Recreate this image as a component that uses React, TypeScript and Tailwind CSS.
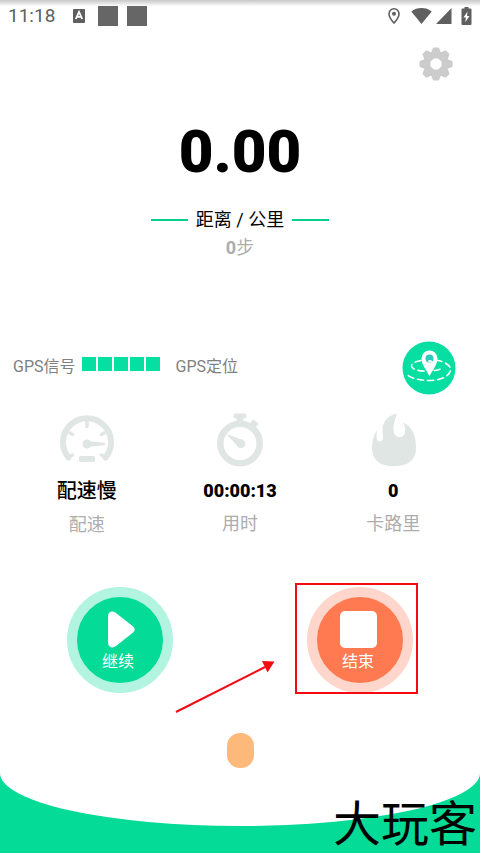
import type { ReactNode } from 'react'

const signalBars = [1, 2, 3, 4, 5]

function StatusBar() {
  return (
    <div className="flex h-8 items-center justify-between bg-linear-to-b from-[#c8c8c8] from-0% via-white via-20% to-white px-2 text-[#5f5f5f]">
      <div className="flex items-center">
        <span className="w-16 text-[19px] leading-6">11:18</span>
        <svg className="mr-3 h-[14px] w-[14px]" viewBox="0 0 14 14">
          <rect x="1" width="12" height="14" rx="1" fill="currentColor" />
          <path
            d="M3.8 10 7 3l3.2 7M5 7.8h4"
            fill="none"
            stroke="white"
            strokeWidth="1.8"
          />
        </svg>
        <span className="mr-[9px] h-5 w-5 bg-[#666]" />
        <span className="h-5 w-5 bg-[#666]" />
      </div>
      <div className="flex items-center">
        <svg className="mr-[10px] h-[18px] w-[14px]" viewBox="0 0 14 18">
          <path
            d="M7 1.8A5 5 0 0 0 2 6.9C2 10.4 7 16 7 16s5-5.6 5-9.1A5 5 0 0 0 7 1.8Z"
            fill="none"
            stroke="currentColor"
            strokeWidth="1.6"
          />
          <circle cx="7" cy="6.8" r="2" fill="currentColor" />
        </svg>
        <svg className="mr-1 h-4 w-[21px]" viewBox="0 0 21 16">
          <path
            d="M10.5 16 .3 3.4C3.2 1.2 6.7 0 10.5 0s7.300 1.200 10.200 3.400Z"
            fill="currentColor"
          />
        </svg>
        <svg className="mr-[9px] h-4 w-4" viewBox="0 0 16 16">
          <path d="M15.5 0v16H0Z" fill="currentColor" />
        </svg>
        <svg className="h-[18px] w-[11px]" viewBox="0 0 11 18">
          <path
            d="M3.500 0h4v1.500H9.500a1 1 0 0 1 1 1V17a1 1 0 0 1-1 1h-8a1 1 0 0 1-1-1V2.500a1 1 0 0 1 1-1h2Z"
            fill="currentColor"
          />
          <path d="M6.500 4.500 2.500 10.500h2.500l-.8 4.700L8.500 9H6Z" fill="white" />
        </svg>
      </div>
    </div>
  )
}

function GearIcon() {
  return (
    <svg className="h-[34px] w-[34px]" viewBox="-17 -17 34 34">
      <g fill="#cccccc">
        <path
          id="tooth"
          d="M-5.500 -10 -3 -16Q-2.700 -16.600 -2 -16.600H2Q2.700 -16.600 3 -16L5.500 -10Z"
        />
        <use href="#tooth" transform="rotate(45)" />
        <use href="#tooth" transform="rotate(90)" />
        <use href="#tooth" transform="rotate(135)" />
        <use href="#tooth" transform="rotate(180)" />
        <use href="#tooth" transform="rotate(225)" />
        <use href="#tooth" transform="rotate(270)" />
        <use href="#tooth" transform="rotate(315)" />
      </g>
      <circle r="9" fill="none" stroke="#cccccc" strokeWidth="6.500" />
    </svg>
  )
}

function MapIcon() {
  return (
    <svg className="h-[54px] w-[54px]" viewBox="0 0 54 54">
      <circle cx="27" cy="27" r="26.500" fill="#06dfa1" />
      <g
        fill="none"
        stroke="white"
        strokeWidth="1.600"
        strokeDasharray="6 4"
        strokeLinecap="round"
      >
        <path d="M19 19.500C13 20.500 9.500 22.500 9.500 25c0 3.200 7 5.200 14 5.200" />
        <path d="M34 19c8 1.500 14.500 5 14.500 9.500 0 6-9 11-21 11-10 0-18-2-22.500-6" />
        <path d="M32 29.500c3 0 7-1.500 9-3" />
      </g>
      <path
        d="M27.500 35.500C25 29.500 19.500 24 19.500 17.500a8 8 0 0 1 16 0C35.500 24 30 29.500 27.500 35.500Z"
        fill="white"
      />
      <circle cx="27.500" cy="17.500" r="4" fill="#2fc9bf" />
      <path d="M26 19.500q2-1 4.500.500-1.500 2-4 1Z" fill="white" />
    </svg>
  )
}

function GaugeIcon() {
  return (
    <svg className="h-14 w-14" viewBox="0 0 56 56">
      <g fill="none" stroke="#e0e6e4" strokeLinecap="round">
        <path d="M9.500 45.500A24 24 0 1 1 46.500 45.500" strokeWidth="6" />
        <path
          d="M28 9v5.500M11 21l2.500 1.500M45 21l-2.500 1.500M9.500 45l4-2M46.500 45l-4-2"
          strokeWidth="3.500"
        />
      </g>
      <path
        d="M28 27.500a4.500 4.500 0 1 0 0 9q2.500 0 4-2l14-1.300v-2.400L32 29.500q-1.500-2-4-2Z"
        fill="#e0e6e4"
      />
      <rect x="20" y="44" width="16" height="6" rx="1.500" fill="#e0e6e4" />
    </svg>
  )
}

function StopwatchIcon() {
  return (
    <svg className="h-14 w-14" viewBox="0 0 56 56">
      <circle
        cx="28"
        cy="31.500"
        r="19.700"
        fill="none"
        stroke="#e0e6e4"
        strokeWidth="6.500"
      />
      <path
        d="M22.500 1.500h11q.800 0 .8.800V5q0 .800-.800 1l-2 .500V11h-7V6.500l-2-.5q-.800-.200-.800-1V2.300q0-.800.800-.800Z"
        fill="#e0e6e4"
      />
      <path
        d="m41.500 7.500 4.500 3.500q.700.600.200 1.300l-3.500 4.700-5.500-4 3-5q.500-.900 1.300-.500Z"
        fill="#e0e6e4"
      />
      <path
        d="M14 21.800 28.800 27.200a4.400 4.400 0 1 1-4.200 5.800Z"
        fill="#e0e6e4"
      />
    </svg>
  )
}

function FlameIcon() {
  return (
    <svg className="h-14 w-14" viewBox="0 0 56 56">
      <path
        d="M32 1.500C24 3 17.500 9 17.500 17c0 3 .8 6 .5 9-.2 2-1.300 3.500-3 3.500-4.500 0-3.500-6-3-11.500C8.500 23 7 29 7 35.500 7 48 15 54.300 29 54.300S51 48 51 35.500C51 24 47 14 38 10.500c2 3 2.500 6 2 9.500-.5 3-2.500 5-5.300 5-3.500 0-5.700-2.500-6-6C28 12.500 30 7 32 1.500Z"
        fill="#e0e6e4"
      />
    </svg>
  )
}

function Stat(props: { icon: ReactNode; value: ReactNode; label: string }) {
  return (
    <div className="flex flex-col items-center">
      {props.icon}
      <div className="mt-[11px] leading-6">{props.value}</div>
      <div className="mt-2 text-[18px] leading-6 text-[#adadad]">
        {props.label}
      </div>
    </div>
  )
}

export default function App() {
  return (
    <div className="flex min-h-screen w-full flex-col overflow-hidden bg-white font-[Roboto,'Noto_Sans_CJK_SC',sans-serif] text-black">
      <StatusBar />
      <header className="flex justify-end pr-[27px] pt-[15px]">
        <button aria-label="设置">
          <GearIcon />
        </button>
      </header>

      <section className="mt-[41px] flex flex-col items-center">
        <div className="text-[60px] font-black leading-[60px]">0.00</div>
        <div className="mt-[26px] flex items-center gap-2">
          <span className="h-[2px] w-[37px] bg-[#06cf8a]" />
          <span className="text-[18px] leading-6">距离 / 公里</span>
          <span className="h-[2px] w-[37px] bg-[#06cf8a]" />
        </div>
        <div className="mt-1 text-[18px] leading-6 text-[#adadad]">
          <span className="font-bold">0</span>步
        </div>
      </section>

      <section className="mt-[81px] flex items-center justify-between pl-[13px] pr-6">
        <div className="flex items-center pb-[2px] text-[16px] leading-6 text-[#808080]">
          <span>GPS信号</span>
          <div className="ml-[6px] mr-4 flex gap-[2px] pb-[6px]">
            {signalBars.map((bar) => (
              <span key={bar} className="h-[14px] w-[14px] bg-[#06dfa1]" />
            ))}
          </div>
          <span>GPS定位</span>
        </div>
        <button aria-label="地图">
          <MapIcon />
        </button>
      </section>

      <section className="mt-[17px] grid grid-cols-3 px-[10px]">
        <Stat
          icon={<GaugeIcon />}
          value={<span className="text-[20px] font-medium">配速慢</span>}
          label="配速"
        />
        <Stat
          icon={<StopwatchIcon />}
          value={<span className="text-[18px] font-black">00:00:13</span>}
          label="用时"
        />
        <Stat
          icon={<FlameIcon />}
          value={<span className="text-[18px] font-black">0</span>}
          label="卡路里"
        />
      </section>

      <section className="mt-[50px] grid grid-cols-2 justify-items-center">
        <button className="flex h-[106px] w-[106px] flex-col items-center rounded-full border-10 border-[#b2f4df] bg-[#04db96] pr-1 pt-[14px] text-white">
          <svg className="ml-[6px] h-[37px] w-7" viewBox="0 0 28 37">
            <path
              d="M1 5.500C1 .8 5 -.8 9 2L25.500 15Q30 18.500 25.500 22L9 35C5 37.800 1 36.200 1 31.500Z"
              fill="currentColor"
            />
          </svg>
          <span className="mt-1 text-[16px] leading-5">继续</span>
        </button>
        <div className="relative">
          <button className="flex h-[106px] w-[106px] flex-col items-center rounded-full border-10 border-[#ffd6cb] bg-[#ff7a50] pr-1 pt-[14px] text-white">
            <span className="h-[37px] w-[37px] rounded-[5px] bg-white" />
            <span className="mt-1 text-[16px] leading-5">结束</span>
          </button>
          <div className="pointer-events-none absolute -bottom-px -left-3 -right-[5px] -top-1 border-2 border-[#f40b12]" />
          <svg
            className="pointer-events-none absolute -left-[132px] top-[72px] h-[54px] w-[100px]"
            viewBox="0 0 100 54"
          >
            <path d="M1 53 90 8" stroke="#f40b12" strokeWidth="2" />
            <path d="m87 2 12.500.500-7 11Z" fill="#f40b12" />
          </svg>
        </div>
      </section>

      <div className="mx-auto mb-[5px] mt-10 h-[35px] w-[27px] rounded-[13px] bg-[#fdb97a]" />

      <footer className="relative mt-auto h-20 bg-[#04db96]">
        <div className="h-[53px] rounded-[0_0_50%_50%/0_0_100%_100%] bg-white" />
        <span className="absolute bottom-1 right-[3px] text-[48px] leading-[48px]">
          大玩客
        </span>
      </footer>
    </div>
  )
}
